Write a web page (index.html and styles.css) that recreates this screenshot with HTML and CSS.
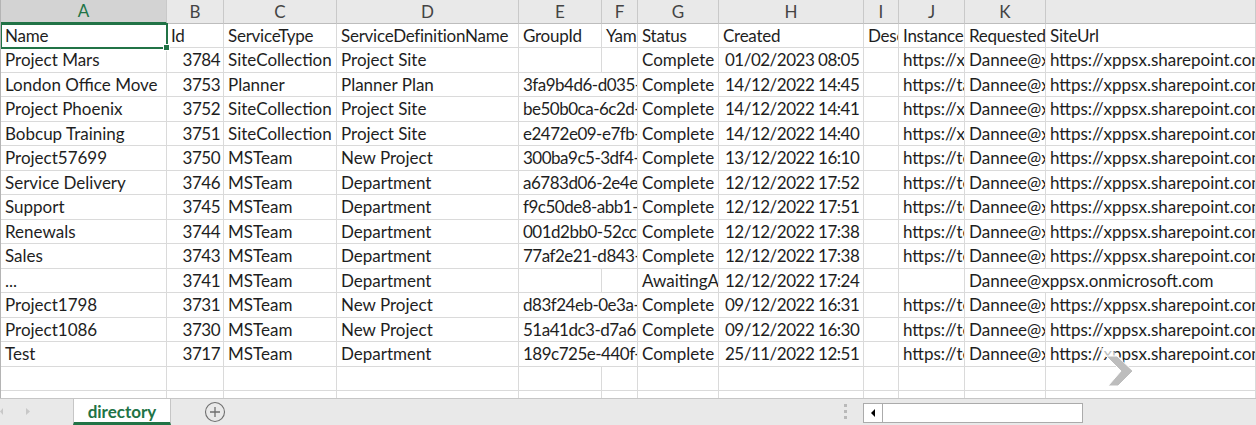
FILE: index.html
```html
<!DOCTYPE html>
<html lang="en">
<head>
    <meta charset="UTF-8">
    <meta name="viewport" content="width=device-width, initial-scale=1.0">
    <title>directory</title>
    <link rel="stylesheet" href="styles.css">
</head>
<body>
    <div class="app">
        <div class="sheet">
            <!-- column letters -->
            <div class="row head">
                <div class="colhead selected">A</div>
                <div class="colhead">B</div>
                <div class="colhead">C</div>
                <div class="colhead">D</div>
                <div class="colhead">E</div>
                <div class="colhead">F</div>
                <div class="colhead">G</div>
                <div class="colhead">H</div>
                <div class="colhead">I</div>
                <div class="colhead">J</div>
                <div class="colhead">K</div>
                <div class="colhead"></div>
            </div>

            <div class="row labels">
                <div class="cell active">Name</div>
                <div class="cell">Id</div>
                <div class="cell">ServiceType</div>
                <div class="cell">ServiceDefinitionName</div>
                <div class="cell">GroupId</div>
                <div class="cell">YammerGroupId</div>
                <div class="cell">Status</div>
                <div class="cell">Created</div>
                <div class="cell">Description</div>
                <div class="cell">InstanceUrl</div>
                <div class="cell">RequestedBy</div>
                <div class="cell">SiteUrl</div>
            </div>
            <div class="row">
                <div class="cell">Project Mars</div>
                <div class="cell num">3784</div>
                <div class="cell">SiteCollection</div>
                <div class="cell">Project Site</div>
                <div class="cell"></div>
                <div class="cell"></div>
                <div class="cell">Complete</div>
                <div class="cell date">01/02/2023 08:05</div>
                <div class="cell"></div>
                <div class="cell">https://xppsx.sharepoint.com/sites/ProjectMars</div>
                <div class="cell">Dannee@xppsx.onmicrosoft.com</div>
                <div class="cell">https://xppsx.sharepoint.com/sites/ProjectMars</div>
            </div>
            <div class="row">
                <div class="cell">London Office Move</div>
                <div class="cell num">3753</div>
                <div class="cell">Planner</div>
                <div class="cell">Planner Plan</div>
                <div class="cell span2 guid">3fa9b4d6-d035-4c1e-9b2a-6f0d8e3a7c41</div>
                <div class="cell">Complete</div>
                <div class="cell date">14/12/2022 14:45</div>
                <div class="cell"></div>
                <div class="cell">https://tasks.office.com/xppsx.onmicrosoft.com</div>
                <div class="cell">Dannee@xppsx.onmicrosoft.com</div>
                <div class="cell">https://xppsx.sharepoint.com/sites/LondonOfficeMove</div>
            </div>
            <div class="row">
                <div class="cell">Project Phoenix</div>
                <div class="cell num">3752</div>
                <div class="cell">SiteCollection</div>
                <div class="cell">Project Site</div>
                <div class="cell span2 guid">be50b0ca-6c2d-4f7a-8e13-2b9c5d0a6f18</div>
                <div class="cell">Complete</div>
                <div class="cell date">14/12/2022 14:41</div>
                <div class="cell"></div>
                <div class="cell">https://xppsx.sharepoint.com/sites/ProjectPhoenix</div>
                <div class="cell">Dannee@xppsx.onmicrosoft.com</div>
                <div class="cell">https://xppsx.sharepoint.com/sites/ProjectPhoenix</div>
            </div>
            <div class="row">
                <div class="cell">Bobcup Training</div>
                <div class="cell num">3751</div>
                <div class="cell">SiteCollection</div>
                <div class="cell">Project Site</div>
                <div class="cell span2 guid">e2472e09-e7fb-4a3d-b6c0-91e8f2d4a735</div>
                <div class="cell">Complete</div>
                <div class="cell date">14/12/2022 14:40</div>
                <div class="cell"></div>
                <div class="cell">https://xppsx.sharepoint.com/sites/BobcupTraining</div>
                <div class="cell">Dannee@xppsx.onmicrosoft.com</div>
                <div class="cell">https://xppsx.sharepoint.com/sites/BobcupTraining</div>
            </div>
            <div class="row">
                <div class="cell">Project57699</div>
                <div class="cell num">3750</div>
                <div class="cell">MSTeam</div>
                <div class="cell">New Project</div>
                <div class="cell span2 guid">300ba9c5-3df4-4e8b-a210-7c6d9f1e5b02</div>
                <div class="cell">Complete</div>
                <div class="cell date">13/12/2022 16:10</div>
                <div class="cell"></div>
                <div class="cell">https://teams.microsoft.com/l/team/19%3a</div>
                <div class="cell">Dannee@xppsx.onmicrosoft.com</div>
                <div class="cell">https://xppsx.sharepoint.com/sites/Project57699</div>
            </div>
            <div class="row">
                <div class="cell">Service Delivery</div>
                <div class="cell num">3746</div>
                <div class="cell">MSTeam</div>
                <div class="cell">Department</div>
                <div class="cell span2 guid">a6783d06-2e4e-4b91-9d3f-0a5c7e8b2f64</div>
                <div class="cell">Complete</div>
                <div class="cell date">12/12/2022 17:52</div>
                <div class="cell"></div>
                <div class="cell">https://teams.microsoft.com/l/team/19%3a</div>
                <div class="cell">Dannee@xppsx.onmicrosoft.com</div>
                <div class="cell">https://xppsx.sharepoint.com/sites/ServiceDelivery</div>
            </div>
            <div class="row">
                <div class="cell">Support</div>
                <div class="cell num">3745</div>
                <div class="cell">MSTeam</div>
                <div class="cell">Department</div>
                <div class="cell span2 guid">f9c50de8-abb1-4c62-8f07-d3e1a9b64c58</div>
                <div class="cell">Complete</div>
                <div class="cell date">12/12/2022 17:51</div>
                <div class="cell"></div>
                <div class="cell">https://teams.microsoft.com/l/team/19%3a</div>
                <div class="cell">Dannee@xppsx.onmicrosoft.com</div>
                <div class="cell">https://xppsx.sharepoint.com/sites/Support</div>
            </div>
            <div class="row">
                <div class="cell">Renewals</div>
                <div class="cell num">3744</div>
                <div class="cell">MSTeam</div>
                <div class="cell">Department</div>
                <div class="cell span2 guid">001d2bb0-52cc-4d8e-b7a4-6e2f0c9d1a83</div>
                <div class="cell">Complete</div>
                <div class="cell date">12/12/2022 17:38</div>
                <div class="cell"></div>
                <div class="cell">https://teams.microsoft.com/l/team/19%3a</div>
                <div class="cell">Dannee@xppsx.onmicrosoft.com</div>
                <div class="cell">https://xppsx.sharepoint.com/sites/Renewals</div>
            </div>
            <div class="row">
                <div class="cell">Sales</div>
                <div class="cell num">3743</div>
                <div class="cell">MSTeam</div>
                <div class="cell">Department</div>
                <div class="cell span2 guid">77af2e21-d843-4a05-9c6b-8d1e3f7a2b90</div>
                <div class="cell">Complete</div>
                <div class="cell date">12/12/2022 17:38</div>
                <div class="cell"></div>
                <div class="cell">https://teams.microsoft.com/l/team/19%3a</div>
                <div class="cell">Dannee@xppsx.onmicrosoft.com</div>
                <div class="cell">https://xppsx.sharepoint.com/sites/Sales</div>
            </div>
            <div class="row">
                <div class="cell">...</div>
                <div class="cell num">3741</div>
                <div class="cell">MSTeam</div>
                <div class="cell">Department</div>
                <div class="cell"></div>
                <div class="cell"></div>
                <div class="cell">AwaitingApproval</div>
                <div class="cell date">12/12/2022 17:24</div>
                <div class="cell"></div>
                <div class="cell"></div>
                <div class="cell span2">Dannee@xppsx.onmicrosoft.com</div>
            </div>
            <div class="row">
                <div class="cell">Project1798</div>
                <div class="cell num">3731</div>
                <div class="cell">MSTeam</div>
                <div class="cell">New Project</div>
                <div class="cell span2 guid">d83f24eb-0e3a-4f19-a6d2-5b7c0e8f3a16</div>
                <div class="cell">Complete</div>
                <div class="cell date">09/12/2022 16:31</div>
                <div class="cell"></div>
                <div class="cell">https://teams.microsoft.com/l/team/19%3a</div>
                <div class="cell">Dannee@xppsx.onmicrosoft.com</div>
                <div class="cell">https://xppsx.sharepoint.com/sites/Project1798</div>
            </div>
            <div class="row">
                <div class="cell">Project1086</div>
                <div class="cell num">3730</div>
                <div class="cell">MSTeam</div>
                <div class="cell">New Project</div>
                <div class="cell span2 guid">51a41dc3-d7a6-4b38-9e0f-2c6a8d1b7e45</div>
                <div class="cell">Complete</div>
                <div class="cell date">09/12/2022 16:30</div>
                <div class="cell"></div>
                <div class="cell">https://teams.microsoft.com/l/team/19%3a</div>
                <div class="cell">Dannee@xppsx.onmicrosoft.com</div>
                <div class="cell">https://xppsx.sharepoint.com/sites/Project1086</div>
            </div>
            <div class="row">
                <div class="cell">Test</div>
                <div class="cell num">3717</div>
                <div class="cell">MSTeam</div>
                <div class="cell">Department</div>
                <div class="cell span2 guid">189c725e-440f-4d6a-b3e8-0f9a2c5d7b61</div>
                <div class="cell">Complete</div>
                <div class="cell date">25/11/2022 12:51</div>
                <div class="cell"></div>
                <div class="cell">https://teams.microsoft.com/l/team/19%3a</div>
                <div class="cell">Dannee@xppsx.onmicrosoft.com</div>
                <div class="cell">https://xppsx.sharepoint.com/sites/Test</div>
            </div>

            <!-- empty rows below the data -->
            <div class="row blank">
                <div class="cell"></div><div class="cell"></div><div class="cell"></div><div class="cell"></div>
                <div class="cell"></div><div class="cell"></div><div class="cell"></div><div class="cell"></div>
                <div class="cell"></div><div class="cell"></div><div class="cell"></div><div class="cell"></div>
            </div>
            <div class="row blank">
                <div class="cell"></div><div class="cell"></div><div class="cell"></div><div class="cell"></div>
                <div class="cell"></div><div class="cell"></div><div class="cell"></div><div class="cell"></div>
                <div class="cell"></div><div class="cell"></div><div class="cell"></div><div class="cell"></div>
            </div>
        </div>

        <!-- sheet tabs + horizontal scroll -->
        <div class="tabs">
            <div class="tab-nav">
                <svg width="73" height="27" viewBox="0 0 73 27">
                    <path d="M3 9 L0 12.5 L3 16 Z" fill="#c8c8c8"/>
                    <path d="M26 9 L30 12.5 L26 16 Z" fill="#c8c8c8"/>
                </svg>
            </div>
            <div class="tab active-tab">directory</div>
            <div class="add-sheet">
                <svg width="22" height="22" viewBox="0 0 22 22">
                    <circle cx="11" cy="11" r="9.5" fill="none" stroke="#6f6f6f" stroke-width="1.1"/>
                    <path d="M11 6 V16 M6 11 H16" stroke="#6f6f6f" stroke-width="1.3"/>
                </svg>
            </div>
            <div class="spacer"></div>
            <div class="grip">
                <span></span><span></span><span></span>
            </div>
            <div class="hscroll">
                <div class="hscroll-btn">
                    <svg width="8" height="10" viewBox="0 0 8 10">
                        <path d="M6 1 L2 5 L6 9 Z" fill="#000"/>
                    </svg>
                </div>
            </div>
            <div class="tail"></div>
        </div>

        <!-- pointer graphic over the grid -->
        <svg class="pointer" width="44" height="48" viewBox="0 0 44 48">
            <polygon points="2,2 14,2 28,15 16,15" fill="#fff" fill-opacity="0.7"/>
            <polygon points="10,10 21,10 37,25 22,40 12,40 25,25" fill="#bdbdbd" stroke="#fff" stroke-width="1"/>
        </svg>
    </div>
</body>
</html>
```

FILE: styles.css
```css
body {
    margin: 0;
    padding: 0;
    background: #fff;
    font-family: Lato, "Open Sans", sans-serif;
    font-size: 17px;
    color: #1e1e1e;
    overflow: hidden;
}
.app {
    position: relative;
    width: 1256px;
    height: 425px;
    display: flex;
    flex-direction: column;
    overflow: hidden;
}
.sheet {
    flex: 1;
    overflow: hidden;
    border-left: 1px solid #b4b4b4;
}
.row {
    display: grid;
    grid-template-columns: 166px 57px 113px 182px 83px 36px 81px 145px 35px 66px 81px 1fr;
    height: 24.5px;
}
.cell {
    box-sizing: border-box;
    border-right: 1px solid #dadada;
    border-bottom: 1px solid #dadada;
    padding: 0 3px 0 4px;
    line-height: 17px;
    display: flex;
    align-items: center;
    white-space: nowrap;
    overflow: hidden;
}
.row.labels .cell {
    letter-spacing: -0.25px;
}
/* digits run wide in this face, pull them in a little */
.cell.num,
.cell.date,
.cell.guid {
    letter-spacing: -0.5px;
}
.cell.num {
    justify-content: flex-end;
    padding-right: 3px;
}
.cell.date {
    padding-left: 6px;
}
.cell.span2 {
    grid-column: span 2;
}
.cell.active {
    position: relative;
    overflow: visible;
    outline: 2px solid #217346;
    outline-offset: -1px;
    z-index: 2;
}
.cell.active::after {
    content: "";
    position: absolute;
    right: -4px;
    bottom: -4px;
    width: 5px;
    height: 5px;
    background: #217346;
    border: 1px solid #fff;
}

/* column letter strip */
.row.head {
    height: 23.5px;
}
.colhead {
    box-sizing: border-box;
    background: #e9e9e9;
    border-right: 1px solid #c9c9c9;
    border-bottom: 1px solid #bdbdbd;
    color: #444;
    line-height: 17px;
    display: flex;
    align-items: center;
    justify-content: center;
}
.colhead.selected {
    background: #d3d3d3;
    color: #217346;
    border-bottom: 2px solid #217346;
}

/* bottom bar */
.tabs {
    height: 27px;
    box-sizing: border-box;
    border-top: 1px solid #c6c6c6;
    background: #e9e9e9;
    display: flex;
    align-items: stretch;
}
.tab-nav {
    width: 73px;
    flex: none;
}
.tab-nav svg {
    display: block;
}
.tab {
    width: 98px;
    flex: none;
    box-sizing: border-box;
    display: flex;
    align-items: center;
    justify-content: center;
}
.active-tab {
    background: #fff;
    border-left: 1px solid #c6c6c6;
    border-right: 1px solid #c6c6c6;
    border-bottom: 3px solid #217346;
    color: #217346;
    font-weight: bold;
    padding-top: 2px;
}
.add-sheet {
    margin-left: 33px;
    width: 22px;
    display: flex;
    align-items: center;
}
.add-sheet svg {
    display: block;
}
.spacer {
    flex: 1;
}
.grip {
    width: 4px;
    display: flex;
    flex-direction: column;
    justify-content: center;
    gap: 3px;
    padding-bottom: 2px;
}
.grip span {
    display: block;
    width: 3px;
    height: 3px;
    background: #b9b9b9;
}
.hscroll {
    margin: 4px 0 2px 15px;
    width: 220px;
    box-sizing: border-box;
    background: #fff;
    border: 1px solid #ababab;
    display: flex;
}
.hscroll-btn {
    width: 19px;
    box-sizing: border-box;
    border-right: 1px solid #ababab;
    display: flex;
    align-items: center;
    justify-content: center;
}
.hscroll-btn svg {
    display: block;
}
.tail {
    width: 173px;
    flex: none;
}

.pointer {
    position: absolute;
    left: 1096px;
    top: 346px;
}
```
